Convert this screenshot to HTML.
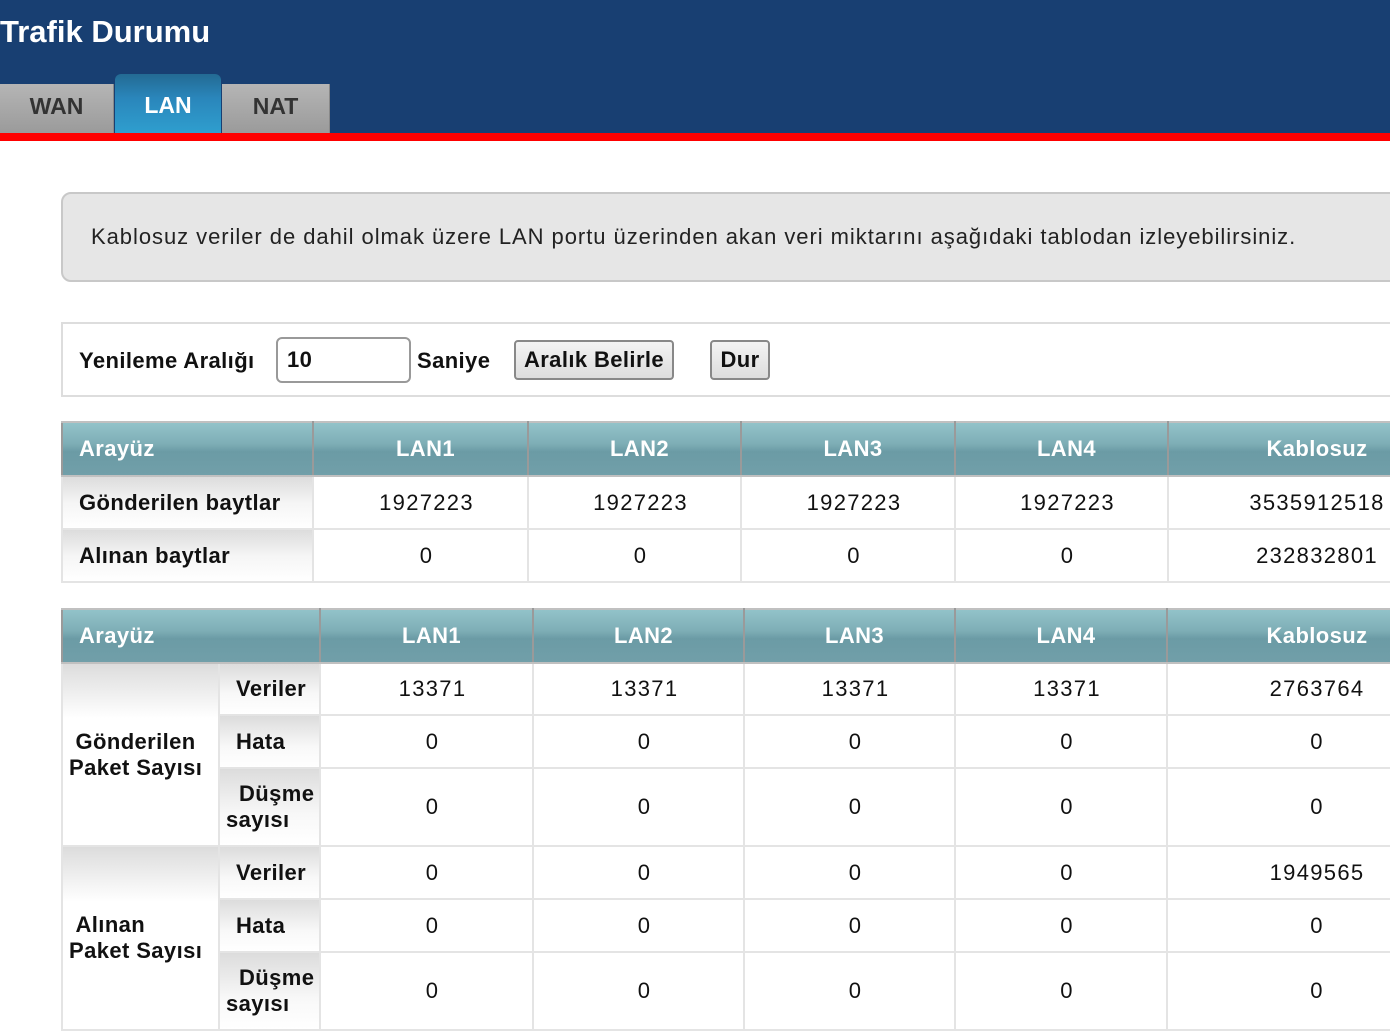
<!DOCTYPE html>
<html><head><meta charset="utf-8"><style>
*{box-sizing:border-box;margin:0;padding:0}
body{width:1390px;height:1035px;overflow:hidden;background:#fff;font-family:"Liberation Sans",sans-serif;position:relative;color:#111}
.hdr{position:absolute;left:0;top:0;width:1390px;height:134px;background:#183f72}
.title{position:absolute;left:0;top:14px;color:#fff;font-size:31px;font-weight:bold}
.red{position:absolute;left:0;top:133px;width:1390px;height:8px;background:#f00}
.tab{position:absolute;top:84px;height:50px;background:linear-gradient(#b5b5b5,#9a9a9a);color:#333;font-weight:bold;font-size:23px;text-align:center;line-height:44px;border-right:1px solid #888}
.tab.on{top:74px;height:60px;background:linear-gradient(#236a93 0%,#2a86bb 40%,#2f9fcf 100%);color:#fff;line-height:62px;border-radius:6px 6px 0 0;border:none}
.info{position:absolute;left:61px;top:192px;width:1340px;height:90px;background:#e6e6e6;border:2px solid #c8c8c8;border-radius:10px 0 0 10px;font-size:22px;letter-spacing:0.95px;line-height:86px;padding-left:28px;color:#222}
.ref{position:absolute;left:61px;top:322px;width:1340px;height:75px;border:2px solid #ddd;font-size:22px;font-weight:bold;letter-spacing:0.4px}
.ref span,.ref div{position:absolute}
.inp{left:213px;top:13px;width:135px;height:46px;border:2px solid #999;border-radius:6px;padding-left:9px;line-height:42px}
.btn{top:16px;height:40px;border:2px solid #888;border-radius:4px;background:linear-gradient(#f3f3f3,#ddd);text-align:center;line-height:36px}
table{position:absolute;left:61px;border-collapse:collapse;table-layout:fixed;font-size:22px;letter-spacing:0.4px}
td,th{text-align:center;border:2px solid #e4e4e4;padding:0}
td{letter-spacing:1.3px;padding-left:12px}
td.k,th.k{padding-left:0}
th{background:linear-gradient(#92c3c9 0%,#7eaeb6 40%,#6b9ba5 55%,#719fa9 100%);color:#fff;border:2px solid #9eb;border-color:#c0c0c0 #9a9a9a;height:54px;padding-left:10px}
th.l{text-align:left;padding-left:16px}
td.lab{background:linear-gradient(#dcdcdc 0%,#f5f5f5 50%,#fff 100%);font-weight:bold;text-align:left;padding-left:16px;letter-spacing:0.4px}
td.g{background:linear-gradient(#dcdcdc 0%,#fff 30%,#fff 100%);font-weight:bold;text-align:left;padding-left:6px;line-height:26px;letter-spacing:0.4px}
td.s{background:linear-gradient(#dcdcdc 0%,#f8f8f8 60%,#fff 100%);font-weight:bold;text-align:left;padding-left:6px;line-height:26px;letter-spacing:0.4px}
.tb{border:2px solid #ccc}
</style></head><body>
<div class="hdr"><div class="title">Trafik Durumu</div>
<div class="tab" style="left:0;width:114px">WAN</div>
<div class="tab on" style="left:115px;width:106px">LAN</div>
<div class="tab" style="left:222px;width:108px">NAT</div>
</div>
<div class="red"></div>
<div class="info">Kablosuz veriler de dahil olmak üzere LAN portu üzerinden akan veri miktarını aşağıdaki tablodan izleyebilirsiniz.</div>
<div class="ref">
<span style="left:16px;top:24px">Yenileme Aralığı</span>
<div class="inp">10</div>
<span style="left:354px;top:24px">Saniye</span>
<div class="btn" style="left:451px;width:160px">Aralık Belirle</div>
<div class="btn" style="left:647px;width:60px">Dur</div>
</div>
<table class="tb" style="top:421px;width:1404px">
<colgroup><col style="width:251px"><col style="width:215px"><col style="width:213px"><col style="width:214px"><col style="width:213px"><col style="width:298px"></colgroup>
<tr><th class="l">Arayüz</th><th>LAN1</th><th>LAN2</th><th>LAN3</th><th>LAN4</th><th class="k">Kablosuz</th></tr>
<tr style="height:53px"><td class="lab">Gönderilen baytlar</td><td>1927223</td><td>1927223</td><td>1927223</td><td>1927223</td><td class="k">3535912518</td></tr>
<tr style="height:53px"><td class="lab">Alınan baytlar</td><td>0</td><td>0</td><td>0</td><td>0</td><td class="k">232832801</td></tr>
</table>
<table class="tb" style="top:608px;width:1405px">
<colgroup><col style="width:157px"><col style="width:101px"><col style="width:213px"><col style="width:211px"><col style="width:211px"><col style="width:212px"><col style="width:300px"></colgroup>
<tr><th class="l" colspan="2">Arayüz</th><th>LAN1</th><th>LAN2</th><th>LAN3</th><th>LAN4</th><th class="k">Kablosuz</th></tr>
<tr style="height:52px"><td class="g" rowspan="3">&nbsp;Gönderilen<br>Paket Sayısı</td><td class="s" style="padding-left:16px">Veriler</td><td>13371</td><td>13371</td><td>13371</td><td>13371</td><td class="k">2763764</td></tr>
<tr style="height:53px"><td class="s" style="padding-left:16px">Hata</td><td>0</td><td>0</td><td>0</td><td>0</td><td class="k">0</td></tr>
<tr style="height:78px"><td class="s">&nbsp;&nbsp;Düşme<br>sayısı</td><td>0</td><td>0</td><td>0</td><td>0</td><td class="k">0</td></tr>
<tr style="height:53px"><td class="g" rowspan="3">&nbsp;Alınan<br>Paket Sayısı</td><td class="s" style="padding-left:16px">Veriler</td><td>0</td><td>0</td><td>0</td><td>0</td><td class="k">1949565</td></tr>
<tr style="height:53px"><td class="s" style="padding-left:16px">Hata</td><td>0</td><td>0</td><td>0</td><td>0</td><td class="k">0</td></tr>
<tr style="height:78px"><td class="s">&nbsp;&nbsp;Düşme<br>sayısı</td><td>0</td><td>0</td><td>0</td><td>0</td><td class="k">0</td></tr>
</table>
</body></html>
